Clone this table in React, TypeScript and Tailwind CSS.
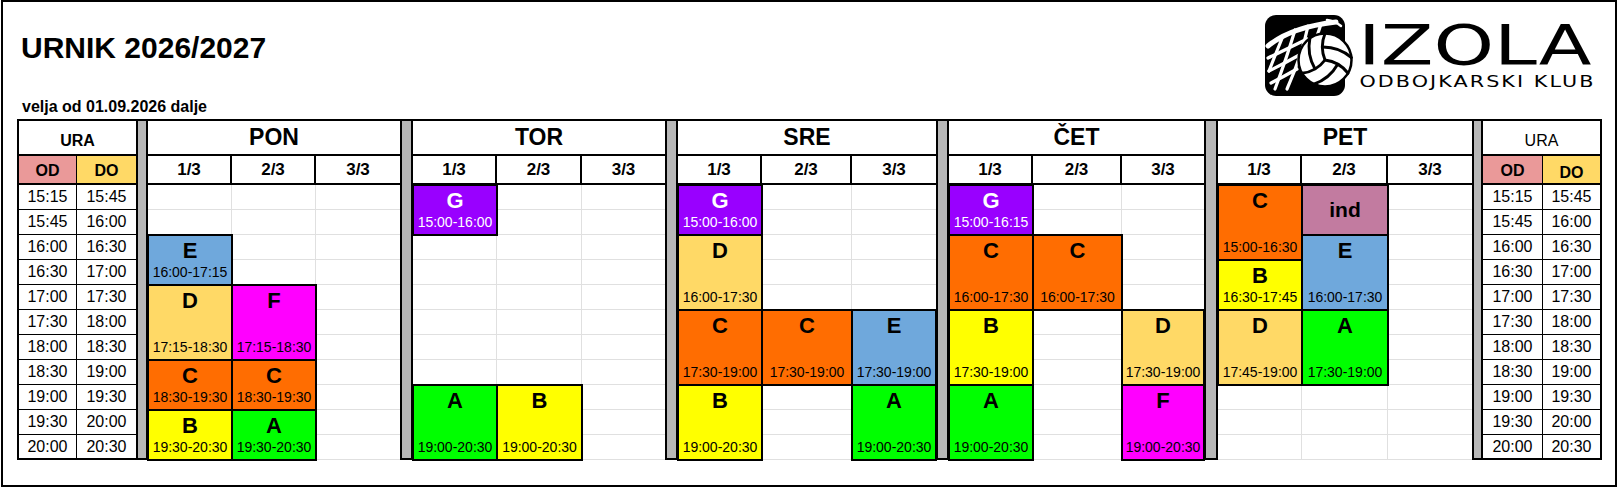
import React from 'react'

type Ev = {
  start: number
  span: number
  label: string
  time?: string
  bg: string
  white?: boolean
}

type Day = {
  name: string
  widths: string[]
  cols: Ev[][]
}

const BG = {
  A: 'bg-[#00ff00]',
  B: 'bg-[#ffff00]',
  C: 'bg-[#ff6d01]',
  D: 'bg-[#ffd966]',
  E: 'bg-[#6fa8dc]',
  F: 'bg-[#ff00ff]',
  G: 'bg-[#9900ff]',
  ind: 'bg-[#c27ba0]',
}

const SPAN_H: Record<number, string> = { 2: 'h-[50px]', 3: 'h-[75px]' }

const ev = (label: keyof typeof BG, start: number, span: number, time?: string): Ev => ({
  label,
  start,
  span,
  time,
  bg: BG[label],
  white: label === 'G',
})

const days: Day[] = [
  {
    name: 'PON',
    widths: ['w-[84px]', 'w-[84px]', 'w-[84px]'],
    cols: [
      [ev('E', 2, 2, '16:00-17:15'), ev('D', 4, 3, '17:15-18:30'), ev('C', 7, 2, '18:30-19:30'), ev('B', 9, 2, '19:30-20:30')],
      [ev('F', 4, 3, '17:15-18:30'), ev('C', 7, 2, '18:30-19:30'), ev('A', 9, 2, '19:30-20:30')],
      [],
    ],
  },
  {
    name: 'TOR',
    widths: ['w-[84px]', 'w-[85px]', 'w-[83px]'],
    cols: [
      [ev('G', 0, 2, '15:00-16:00'), ev('A', 8, 3, '19:00-20:30')],
      [ev('B', 8, 3, '19:00-20:30')],
      [],
    ],
  },
  {
    name: 'SRE',
    widths: ['w-[84px]', 'w-[90px]', 'w-[84px]'],
    cols: [
      [ev('G', 0, 2, '15:00-16:00'), ev('D', 2, 3, '16:00-17:30'), ev('C', 5, 3, '17:30-19:00'), ev('B', 8, 3, '19:00-20:30')],
      [ev('C', 5, 3, '17:30-19:00')],
      [ev('E', 5, 3, '17:30-19:00'), ev('A', 8, 3, '19:00-20:30')],
    ],
  },
  {
    name: 'ČET',
    widths: ['w-[84px]', 'w-[89px]', 'w-[82px]'],
    cols: [
      [ev('G', 0, 2, '15:00-16:15'), ev('C', 2, 3, '16:00-17:30'), ev('B', 5, 3, '17:30-19:00'), ev('A', 8, 3, '19:00-20:30')],
      [ev('C', 2, 3, '16:00-17:30')],
      [ev('D', 5, 3, '17:30-19:00'), ev('F', 8, 3, '19:00-20:30')],
    ],
  },
  {
    name: 'PET',
    widths: ['w-[84px]', 'w-[86px]', 'w-[84px]'],
    cols: [
      [ev('C', 0, 3, '15:00-16:30'), ev('B', 3, 2, '16:30-17:45'), ev('D', 5, 3, '17:45-19:00')],
      [ev('ind', 0, 2), ev('E', 2, 3, '16:00-17:30'), ev('A', 5, 3, '17:30-19:00')],
      [],
    ],
  },
]

const seps = ['w-[12px]', 'w-[13px]', 'w-[13px]', 'w-[13px]', 'w-[14px]', 'w-[11px]']

const hours = [
  ['15:15', '15:45'],
  ['15:45', '16:00'],
  ['16:00', '16:30'],
  ['16:30', '17:00'],
  ['17:00', '17:30'],
  ['17:30', '18:00'],
  ['18:00', '18:30'],
  ['18:30', '19:00'],
  ['19:00', '19:30'],
  ['19:30', '20:00'],
  ['20:00', '20:30'],
]

function Logo() {
  return (
    <div className="flex pt-[13px]">
      <svg width="88" height="82" viewBox="0 0 88 82" className="shrink-0 overflow-visible">
        <rect x="0" y="0" width="80" height="81" rx="11" fill="#000" />
        <g fill="none" stroke="#fff" strokeLinecap="round">
          {/* hoop rim */}
          <path d="M3 31 Q26 12 71 7" strokeWidth="5" />
          <path d="M62 5 Q70 6 76 11" strokeWidth="2.5" />
          {/* net strands */}
          <path d="M18 21 Q11 38 4 56" strokeWidth="3.2" />
          <path d="M30 15 Q22 42 10 74" strokeWidth="3.2" />
          <path d="M43 11 Q37 40 22 74" strokeWidth="3.2" />
          <path d="M56 9 Q51 26 40 48" strokeWidth="3.2" />
          <path d="M3 43 Q20 35 42 24" strokeWidth="3.2" />
          <path d="M4 56 Q20 48 38 38" strokeWidth="3.2" />
          <path d="M6 68 Q18 62 32 54" strokeWidth="3.2" />
        </g>
        <circle cx="60" cy="45" r="26.5" fill="#fff" stroke="#000" strokeWidth="2.5" />
        <g transform="translate(28.2 13.2) scale(2.65)" fill="none" stroke="#000" strokeWidth="1.1" strokeLinecap="round">
          <path d="M11.1 7.1a16.55 16.55 0 0 1 10.9 4" />
          <path d="M12 12a12.6 12.6 0 0 1-8.7 5" />
          <path d="M16.8 13.6a16.55 16.55 0 0 1-9 7.5" />
          <path d="M20.7 17a12.8 12.8 0 0 0-8.7-5 13.3 13.3 0 0 1 0-10" />
          <path d="M6.3 3.8a16.55 16.55 0 0 0 1.9 11.5" />
        </g>
      </svg>
      <div className="ml-[5px] font-['DejaVu_Sans',sans-serif]">
        <div className="mt-[3px] h-[55px] origin-left scale-x-[1.4] text-[55px] leading-[55px]">IZOLA</div>
        <div className="mt-[2px] origin-left scale-x-[1.38] pl-px text-[15px] leading-[15px] tracking-[1.5px] whitespace-nowrap">
          ODBOJKARSKI KLUB
        </div>
      </div>
    </div>
  )
}

function Ura({ right }: { right?: boolean }) {
  return (
    <div className={`flex w-[119px] shrink-0 flex-col border-black ${right ? 'border-r-2' : 'border-l-2'}`}>
      <div
        className={`flex h-[37px] items-center justify-center border-y-2 border-black pt-[7px] text-[16px] leading-4 ${
          right ? 'font-normal' : 'font-bold'
        }`}
      >
        URA
      </div>
      <div className="flex h-[29px] border-b-2 border-black text-[16px] leading-4 font-bold">
        <div
          className={`flex items-center justify-center border-r border-black bg-[#ea9999] pt-[2px] ${
            right ? 'w-[60px]' : 'w-[58px]'
          }`}
        >
          OD
        </div>
        <div className={`flex flex-1 items-center justify-center bg-[#ffd966] ${right ? 'pt-[6px]' : 'pt-[2px]'}`}>DO</div>
      </div>
      {hours.map((h, i) => (
        <div key={i} className={`flex h-[25px] border-black text-[16px] leading-4 ${i === 10 ? 'border-b-2' : 'border-b'}`}>
          <div className={`flex items-center justify-center border-r border-black ${right ? 'w-[60px]' : 'w-[58px]'}`}>{h[0]}</div>
          <div className="flex flex-1 items-center justify-center">{h[1]}</div>
        </div>
      ))}
    </div>
  )
}

function Block({ e }: { e: Ev }) {
  if (!e.time) {
    return (
      <div
        className={`relative z-10 flex ${SPAN_H[e.span]} items-center justify-center pb-[2px] outline-2 -outline-offset-1 outline-black ${e.bg}`}
      >
        <span className="text-[21px] leading-[21px] font-bold">{e.label}</span>
      </div>
    )
  }
  return (
    <div
      className={`relative z-10 flex ${SPAN_H[e.span]} flex-col items-center justify-between pt-[5px] pb-[6px] outline-2 -outline-offset-1 outline-black ${e.bg} ${
        e.white ? 'text-white' : 'text-black'
      }`}
    >
      <span className="text-[22px] leading-[22px] font-bold">{e.label}</span>
      <span className="text-[14px] leading-[14px] whitespace-nowrap">{e.time}</span>
    </div>
  )
}

function Column({ events, width, last }: { events: Ev[]; width: string; last: boolean }) {
  const slots: React.ReactNode[] = []
  let r = 0
  while (r < 11) {
    const e = events.find((x) => x.start === r)
    if (e) {
      slots.push(<Block key={r} e={e} />)
      r += e.span
    } else {
      slots.push(<div key={r} className={`h-[25px] border-b border-[#e0e0e0] ${last ? '' : 'border-r'}`} />)
      r += 1
    }
  }
  return <div className={`flex ${width} flex-col`}>{slots}</div>
}

function DaySection({ day }: { day: Day }) {
  return (
    <div className="flex shrink-0 flex-col">
      <div className="flex h-[37px] items-center justify-center border-y-2 border-black text-[23px] leading-[23px] font-bold">
        {day.name}
      </div>
      <div className="flex h-[29px] border-b-2 border-black">
        {day.widths.map((w, i) => (
          <div
            key={i}
            className={`flex ${w} items-center justify-center text-[17px] leading-[17px] font-bold ${i < 2 ? 'border-r-2 border-black' : ''}`}
          >
            {i + 1}/3
          </div>
        ))}
      </div>
      <div className="flex">
        {day.cols.map((c, i) => (
          <Column key={i} events={c} width={day.widths[i]} last={i === 2} />
        ))}
      </div>
    </div>
  )
}

function Sep({ w }: { w: string }) {
  return <div className={`h-[341px] shrink-0 border-2 border-black bg-[#b7b7b7] ${w}`} />
}

export default function App() {
  return (
    <div className="h-[488px] w-[1620px] bg-white font-['Liberation_Sans',Arial,sans-serif] text-black">
      <div className="ml-px h-[487px] w-[1616px] border-2 border-black">
        <div className="flex h-[117px]">
          <div className="w-[1262px] shrink-0 pt-[31px] pl-[19px]">
            <h1 className="-ml-px text-[30px] leading-[30px] font-bold">URNIK 2026/2027</h1>
            <p className="mt-[36px] text-[16px] leading-4 font-bold">velja od 01.09.2026 dalje</p>
          </div>
          <Logo />
        </div>
        <div className="flex pl-[14px]">
          <Ura />
          {days.map((d, i) => (
            <React.Fragment key={d.name}>
              <Sep w={seps[i]} />
              <DaySection day={d} />
            </React.Fragment>
          ))}
          <Sep w={seps[5]} />
          <Ura right />
        </div>
      </div>
    </div>
  )
}
